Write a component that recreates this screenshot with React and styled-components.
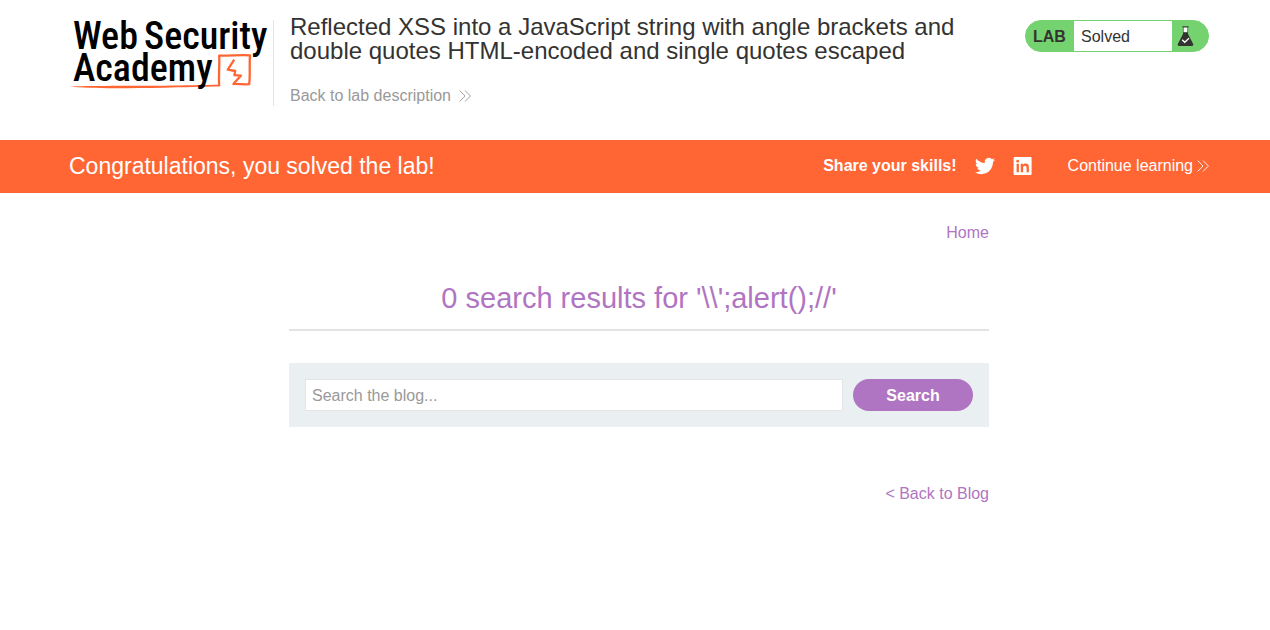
import React from "react";
import styled, { createGlobalStyle } from "styled-components";

const colors = {
  text: "#333332",
  muted: "#999999",
  line: "#e4e4e4",
  orange: "#ff6633",
  purple: "#b075c2",
  green: "#75d36f",
  panel: "#eaeff2",
};

const GlobalStyle = createGlobalStyle`
  *, *::before, *::after { box-sizing: border-box; }
  body {
    margin: 0;
    background: #fff;
    color: ${colors.text};
    font: 16px/24px Arial, "Liberation Sans", sans-serif;
  }
`;

const Gutter = styled.div`
  padding: 0 61px 0 69px;
`;

const HeaderRow = styled(Gutter)`
  display: flex;
  align-items: flex-start;
  padding-top: 20px;
  padding-bottom: 32px;
`;

const LogoLink = styled.a`
  flex: none;
  display: block;
  height: 86px;
  border-right: 1px solid ${colors.line};
`;

const LogoSvg = styled.svg`
  display: block;
  overflow: visible;
`;

const LogoText = styled.text`
  font: 500 38px/38px "Roboto Condensed", Roboto, sans-serif;
  fill: #000;
`;

const TitleBlock = styled.div`
  flex: 1;
  padding: 0 16px;
  margin-top: -5px;
`;

const Title = styled.h2`
  margin: 0 0 21px;
  max-width: 700px;
  font-size: 24px;
  line-height: 24px;
  font-weight: 400;
`;

const TextLink = styled.a`
  display: flex;
  width: fit-content;
  align-items: center;
  gap: ${(p) => p.$gap || 0}px;
  color: ${(p) => p.$color};
  text-decoration: none;
`;

const StatusBadge = styled.div`
  flex: none;
  display: flex;
  width: 184px;
  height: 32px;
  border: 1px solid ${colors.green};
  border-radius: 16px;
  background: ${colors.green};
  line-height: 32px;
`;

const StatusTag = styled.span`
  width: 48px;
  padding-left: 7px;
  font-weight: 700;
`;

const StatusValue = styled.span`
  width: 98px;
  padding-left: 7px;
  background: #fff;
`;

const FlaskSvg = styled.svg`
  margin: 5px 0 0 5px;
`;

const Banner = styled.section`
  background: ${colors.orange};
  color: #fff;
`;

const BannerRow = styled(Gutter)`
  display: flex;
  align-items: center;
  min-height: 53px;
  padding-bottom: 2px;
`;

const BannerTitle = styled.h4`
  flex: 1;
  margin: 0;
  font-size: 23px;
  font-weight: 400;
`;

const Share = styled.div`
  display: flex;
  align-items: center;
  gap: 18px;
  margin-right: 35px;
  font-weight: 700;
`;

const IconButton = styled.button`
  display: block;
  width: 20px;
  height: 20px;
  padding: 0;
  border: 0;
  background: none;
  color: inherit;
  cursor: pointer;

  svg { display: block; }
`;

const Main = styled.main`
  max-width: 700px;
  margin: 0 auto;
  padding-top: 28px;
`;

const LinkRow = styled.div`
  display: flex;
  justify-content: flex-end;
`;

const ResultHeading = styled.h1`
  margin: 32px 0;
  padding: 3px 0 13px;
  border-bottom: 2px solid ${colors.line};
  font-size: 29px;
  line-height: 36px;
  font-weight: 400;
  text-align: center;
  color: ${colors.purple};
`;

const SearchForm = styled.form`
  display: flex;
  gap: 10px;
  margin-bottom: 55px;
  padding: 16px;
  background: ${colors.panel};
`;

const SearchInput = styled.input`
  flex: 1;
  min-width: 0;
  height: 32px;
  padding: 2px 6px 0;
  border: 1px solid ${colors.line};
  background: #fff;
  color: ${colors.text};
  font: inherit;

  &::placeholder { color: ${colors.muted}; opacity: 1; }
`;

const SearchButton = styled.button`
  width: 120px;
  height: 32px;
  padding: 2px 0 0;
  border: 0;
  border-radius: 16px;
  background: ${colors.purple};
  color: #fff;
  font: inherit;
  font-weight: 700;
  cursor: pointer;
`;

function Chevrons() {
  return (
    <svg width="12" height="12" viewBox="0 0 12 12" fill="none" stroke="currentColor" strokeWidth="0.9" aria-hidden="true">
      <path d="M0.6 0.5L6 6L0.6 11.5M6 0.5L11.4 6L6 11.5" />
    </svg>
  );
}

function Logo() {
  return (
    <LogoSvg width="204" height="86" viewBox="0 0 204 86">
      <LogoText x="4" y="29">Web</LogoText>
      <LogoText x="75" y="29">Security</LogoText>
      <path d="M0.5 66.6C14 65.4 70 66 95 65.7C115 65.4 135 65 151 64.8V66.6C135 66.8 115 67.4 95 67.8C60 68.2 20 69 0.5 66.6Z" fill={colors.orange} />
      <path
        d="M150.2 66C149.4 55 150.8 46 150.2 35.6C160 36 172 34.6 181 35.4C180.2 45 181.4 55 180.2 64.2C175 64.6 169 63.8 164.4 64L172 55.6L165.4 55.2L166.2 51L158.8 49.6L165.2 39.6"
        fill="none"
        stroke={colors.orange}
        strokeWidth="2.3"
        strokeLinejoin="round"
      />
      <LogoText x="4" y="61">Academy</LogoText>
    </LogoSvg>
  );
}

function Flask() {
  return (
    <FlaskSvg width="17" height="21" viewBox="0 0 17 21" aria-hidden="true">
      <path d="M6 6V8L0.8 18Q0.2 20 2 20H15Q16.8 20 16.2 18L11 8V6Z" fill={colors.text} />
      <path d="M6.3 1H10.7V6.5H6.3Z" fill="#fff" stroke={colors.text} strokeWidth="0.6" />
      <path d="M5.2 0.8H11.8" stroke={colors.text} strokeWidth="0.8" />
      <path d="M5.2 13.8L7.7 16.2L12 12.2" fill="none" stroke="#fff" strokeWidth="1.4" />
    </FlaskSvg>
  );
}

function Twitter() {
  return (
    <svg width="20" height="20" viewBox="0 0 24 24" fill="currentColor" aria-hidden="true">
      <path d="M23.95 4.57a10 10 0 0 1-2.82.77 4.96 4.96 0 0 0 2.16-2.72c-.95.55-2 .95-3.13 1.18a4.92 4.92 0 0 0-8.38 4.48C7.69 8.1 4.07 6.13 1.64 3.16a4.93 4.93 0 0 0 1.52 6.57 4.9 4.9 0 0 1-2.23-.61v.06a4.92 4.92 0 0 0 3.95 4.83 5 5 0 0 1-2.21.08 4.94 4.94 0 0 0 4.6 3.42A9.87 9.87 0 0 1 0 19.54a14 14 0 0 0 7.55 2.21c9.05 0 14-7.5 14-13.98 0-.21 0-.42-.02-.63a9.94 9.94 0 0 0 2.46-2.55z" />
    </svg>
  );
}

function LinkedIn() {
  return (
    <svg width="20" height="20" viewBox="0 0 20 20" aria-hidden="true">
      <rect x="0.6" y="1" width="18" height="18" rx="1" fill="#fff" />
      <g fill={colors.orange}>
        <circle cx="4.7" cy="5.2" r="1.4" />
        <path d="M3.6 7.8H5.9V16.2H3.6ZM7.8 7.8H10V9C10.6 8.1 11.5 7.6 12.6 7.6C15 7.6 15.9 9.2 15.9 11.4V16.2H13.6V12C13.6 10.8 13.3 9.8 12 9.8C10.6 9.8 10.1 10.8 10.1 11.9V16.2H7.8Z" />
      </g>
    </svg>
  );
}

export default function App() {
  return (
    <>
      <GlobalStyle />
      <header>
        <HeaderRow>
          <LogoLink href="#" aria-label="Web Security Academy">
            <Logo />
          </LogoLink>
          <TitleBlock>
            <Title>
              Reflected XSS into a JavaScript string with angle brackets and double quotes HTML-encoded and single
              quotes escaped
            </Title>
            <TextLink href="#" $color={colors.muted} $gap={8}>
              Back to lab description
              <Chevrons />
            </TextLink>
          </TitleBlock>
          <StatusBadge>
            <StatusTag>LAB</StatusTag>
            <StatusValue>Solved</StatusValue>
            <Flask />
          </StatusBadge>
        </HeaderRow>
      </header>
      <Banner>
        <BannerRow>
          <BannerTitle>Congratulations, you solved the lab!</BannerTitle>
          <Share>
            <span>Share your skills!</span>
            <IconButton type="button" aria-label="Share on Twitter">
              <Twitter />
            </IconButton>
            <IconButton type="button" aria-label="Share on LinkedIn">
              <LinkedIn />
            </IconButton>
          </Share>
          <TextLink href="#" $color="#fff" $gap={4}>
            Continue learning
            <Chevrons />
          </TextLink>
        </BannerRow>
      </Banner>
      <Gutter>
        <Main>
          <LinkRow>
            <TextLink href="#" $color={colors.purple}>Home</TextLink>
          </LinkRow>
          <ResultHeading>{"0 search results for '\\\\';alert();//'"}</ResultHeading>
          <SearchForm onSubmit={(e) => e.preventDefault()}>
            <SearchInput type="text" name="search" placeholder="Search the blog..." aria-label="Search the blog" />
            <SearchButton type="submit">Search</SearchButton>
          </SearchForm>
          <LinkRow>
            <TextLink href="#" $color={colors.purple}>&lt; Back to Blog</TextLink>
          </LinkRow>
        </Main>
      </Gutter>
    </>
  );
}
